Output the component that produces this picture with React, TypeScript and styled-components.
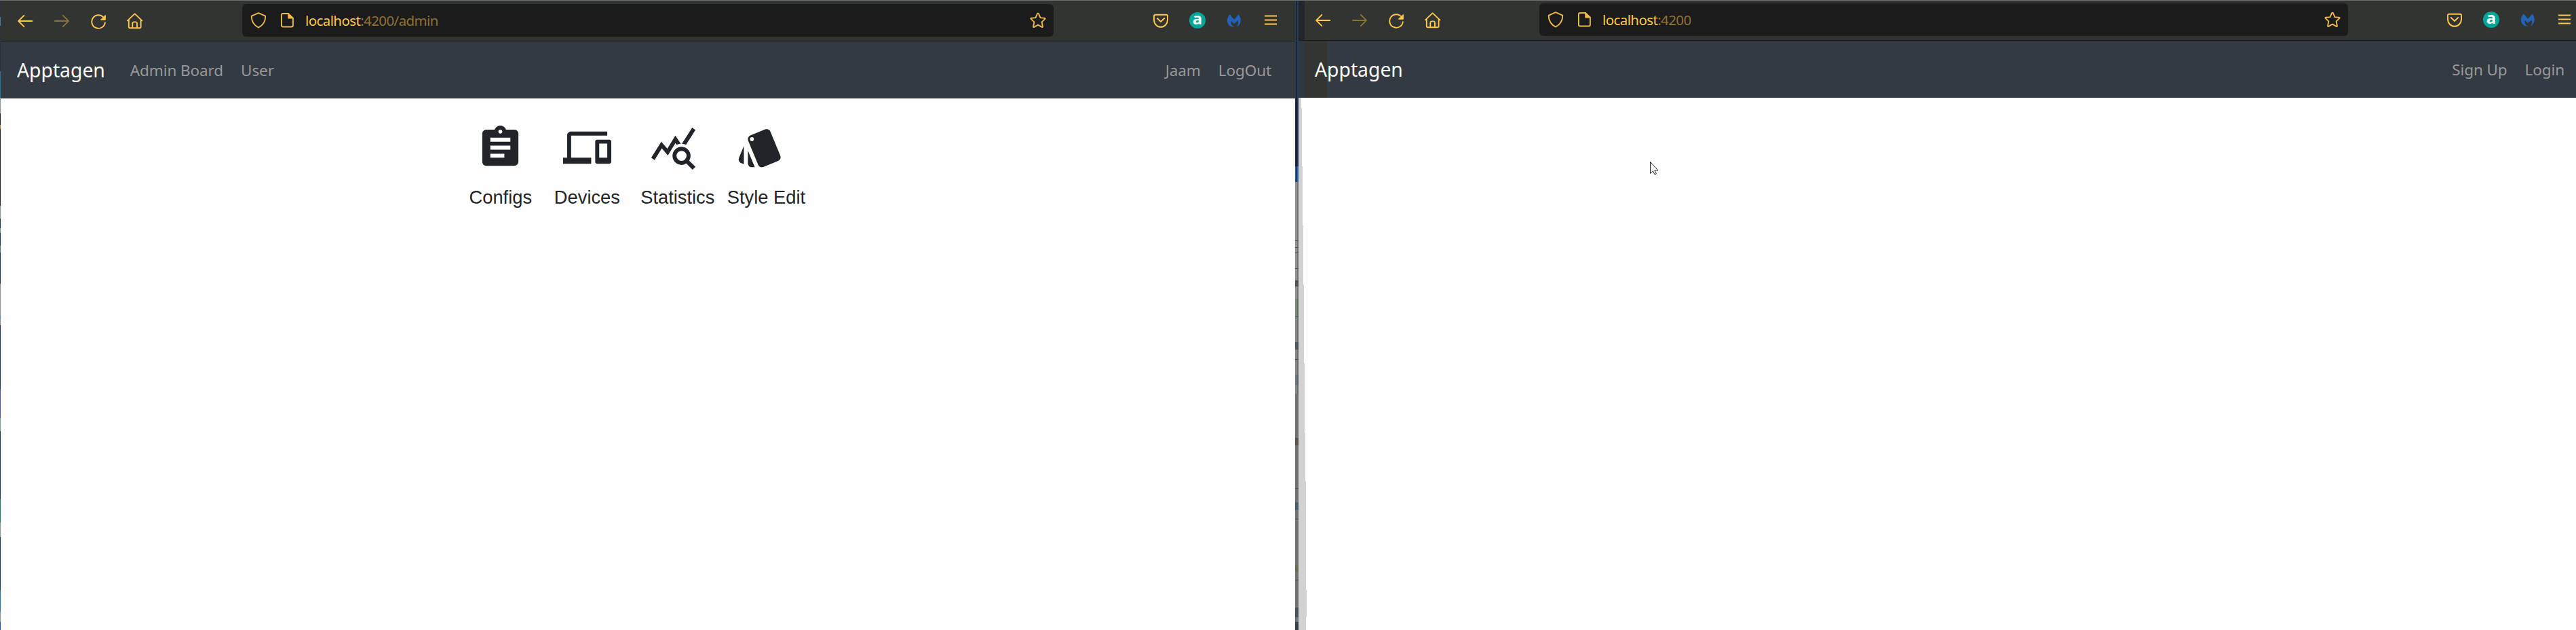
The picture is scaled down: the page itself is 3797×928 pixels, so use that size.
import React from 'react';
import styled, { createGlobalStyle } from 'styled-components';
import { MdAssignment, MdDevices, MdQueryStats, MdStyle } from 'react-icons/md';

const GlobalStyle = createGlobalStyle`
  * { box-sizing: border-box; }
  body { margin: 0; background: #fefefe; overflow: hidden; }
`;

const amber = '#ffc84a';
const uiFont = "'Noto Sans', 'Open Sans', sans-serif";

const Desktop = styled.div`
  display: flex;
  width: 3797px;
  height: 928px;
  overflow: hidden;
  position: relative;
  border-top: 1px solid #6d706e;
  background: #fefefe;
`;

const LeftEdge = styled.div`
  flex: none;
  width: 1px;
  background: linear-gradient(
    #2c3338 0 24px, #4d7c98 24px 37px, #2c3338 37px 104px, #2f6f9b 104px 143px,
    #8e979c 143px 166px, #222426 166px 183px, #b07a3c 183px 189px, #222426 189px 302px,
    #8e979c 302px 321px, #26323b 321px 335px, #7b8a94 335px 342px, #26323b 342px 361px,
    #5b7184 361px 371px, #26323b 371px 417px, #918e8b 417px 464px, #4f8fb4 464px 468px,
    #918e8b 468px 478px, #26323b 478px 572px, #55559a 572px 615px, #8e979c 615px 634px,
    #26323b 634px 734px, #2f7857 734px 769px, #8e979c 769px 790px, #26323b 790px 868px,
    #2f6f9b 868px 900px, #8e979c 900px 915px, #2450a0 915px
  );
`;

const Gap = styled.div`
  flex: none;
  width: 5px;
  background:
    linear-gradient(90deg, transparent 0 2px, #08142c 2px 3px, transparent 3px) 0 0 / 5px 267px no-repeat,
    linear-gradient(90deg, transparent 0 3px, rgba(70, 70, 70, 0.45) 3px) 0 267px / 5px 312px no-repeat,
    linear-gradient(
      #2a3a50 0 143px, #22304c 143px 244px, #2d629c 244px 267px, #919191 267px 353px,
      #555 353px 354px, #919191 354px 363px, #555 363px 364px, #919191 364px 370px,
      #555 370px 371px, #919191 371px 394px, #555 394px 395px, #919191 395px 412px,
      #58534e 412px 421px, #919191 421px 439px, #788a74 439px 465px, #2f5f98 465px 466px,
      #868686 466px 503px, #4a5a68 503px 514px, #868686 514px 528px, #2c4564 528px 529px,
      #868686 529px 551px, #6b7680 551px 566px, #868686 566px 579px, #707272 579px 644px,
      #5b534a 644px 655px, #707272 655px 718px, #505252 718px 719px, #707272 719px 739px,
      #4b5a6b 739px 750px, #707272 750px 763px, #505252 763px 764px, #707272 764px 832px,
      #6b6a55 832px 841px, #707272 841px 853px, #505252 853px 854px, #707272 854px 894px,
      #47525c 894px 908px, #687173 908px 915px, #33414c 915px
    );
`;

const Window = styled.section<{ $width: number }>`
  flex: none;
  display: flex;
  flex-direction: column;
  width: ${(p) => p.$width}px;
  background: #fefefe;
`;

const Toolbar = styled.div<{ $compact?: boolean }>`
  flex: none;
  display: flex;
  align-items: flex-start;
  height: ${(p) => (p.$compact ? 59 : 60)}px;
  padding: ${(p) => (p.$compact ? '4px 5px 0 24px' : '5px 24px 0 24px')};
  border-bottom: 1px solid #191a1a;
  background: ${(p) =>
    p.$compact ? 'linear-gradient(90deg, #23272b 0 9px, #323432 9px)' : '#323432'};
`;

const IconRow = styled.div<{ $drop?: number }>`
  flex: none;
  display: flex;
  align-items: center;
  gap: 30px;
  height: 48px;
  padding-top: ${(p) => p.$drop ?? 0}px;
  color: ${amber};

  svg { display: block; }
`;

const AddressBar = styled.div<{ $width: number; $start: number }>`
  flex: none;
  display: flex;
  align-items: center;
  width: ${(p) => p.$width}px;
  height: 48px;
  margin-left: ${(p) => p.$start}px;
  padding: 0 11px 0 12px;
  border-radius: 6px;
  background: #1b1b1b;
  color: #ecb94a;

  svg { display: block; flex: none; }
`;

const PageGlyph = styled.span`
  margin: 0 17px 0 20px;
`;

const Url = styled.span`
  flex: 1;
  font: 20.5px/28px ${uiFont};
  letter-spacing: -0.6px;
  white-space: nowrap;
  color: #8b7238;

  b { font-weight: 400; color: #ffc84a; }
`;

const Spacer = styled.div`
  flex: 1;
`;

const NavBar = styled.nav<{ $compact?: boolean }>`
  flex: none;
  display: flex;
  align-items: center;
  height: 84px;
  padding: ${(p) => (p.$compact ? '0 17px 0 24px' : '0 35px 0 24px')};
  background: ${(p) =>
    p.$compact ? 'linear-gradient(90deg, #2f3840 0 8px, #333532 8px 42px, #343a41 42px)' : '#343a41'};
  font-family: ${uiFont};
  white-space: nowrap;
`;

const Brand = styled.a`
  margin-right: 37px;
  font-size: 28.3px;
  color: #fff;
`;

const Links = styled.div`
  display: flex;
  gap: 26px;
  padding-top: 1px;
`;

const NavLink = styled.a`
  font-size: 22.5px;
  letter-spacing: -0.1px;
  color: #97999b;
`;

const Page = styled.main`
  flex: 1;
  display: flex;
`;

const PageEdge = styled.svg`
  display: block;
  flex: none;
`;

const Menu = styled.div`
  display: flex;
  gap: 30px;
  height: 190px;
  margin-left: 688px;
  padding-top: 37px;
`;

const MenuItem = styled.a`
  display: flex;
  flex-direction: column;
  width: 97.6px;
  color: #212529;

  svg { align-self: center; width: 71px; height: 71px; }
`;

const MenuLabel = styled.span`
  margin-top: 22px;
  font: 27.3px/32px 'Liberation Sans', Arial, sans-serif;
  text-align: center;
  white-space: nowrap;
`;

const Pointer = styled.svg`
  position: absolute;
  left: 2431px;
  top: 236px;
`;

const Line = ({ children, width = 24, fade }: { children: React.ReactNode; width?: number; fade?: boolean }) => (
  <svg width={width} height={24} viewBox={`0 0 ${width} 24`} fill="none" stroke="currentColor" strokeWidth={1.9}
    strokeLinecap="round" strokeLinejoin="round" opacity={fade ? 0.42 : 1}>
    {children}
  </svg>
);

const Back = () => <Line><path d="M22.3 12H2.4M10.3 3.8 2.2 12l8.1 8.2" /></Line>;
const Forward = () => <Line fade><path d="M1.9 12h19.9M13.9 3.8 22 12l-8.1 8.2" /></Line>;
const Reload = () => (
  <Line>
    <path d="M21.8 14.3A9.8 9.8 0 1 1 20 7.2" />
    <path d="M22.3 3.8v6.4h-6.7z" fill="currentColor" strokeWidth={1} />
  </Line>
);
const Home = () => (
  <Line>
    <path d="M1 11.4 11.2 1.6q.4-.3.8 0L22.3 11.4M2.8 10v10.4q0 1.8 1.8 1.8h14.2q1.8 0 1.8-1.8V10" />
    <path d="M8.3 22v-6.2q0-2.4 2.4-2.4h1.9q2.4 0 2.4 2.4V22" />
  </Line>
);
const Shield = () => <Line><path d="M12 1.1 22.2 5.7C22.6 13 18.5 19.6 12 22.6 5.5 19.6 1.4 13 1.8 5.7z" /></Line>;
const Doc = () => (
  <Line width={20}>
    <path d="M12 2H4.2Q1.9 2 1.9 4.3v14.9q0 2.3 2.3 2.3h12.4q2.3 0 2.3-2.3V8.7" />
    <path d="M12.2 2.2v6.3h6.5z" fill="currentColor" />
  </Line>
);
const Star = () => (
  <Line>
    <path d="M12 1.6q.7 0 1 .7l2.500 5.800 6.200.6q1.500.2.5 1.400l-4.600 4.300 1.300 6.600q.1 1.400-1.200.9L12 18.700l-5.700 3.200q-1.300.5-1.200-.9l1.300-6.600L1.800 10.100q-1-1.200.5-1.400l6.200-.6L11 2.300q.3-.7 1-.7z" />
  </Line>
);
const Pocket = () => (
  <Line>
    <path d="M4 3.7h16q2 0 2 2V11c0 6.2-4.5 10.8-10 10.8S2 17.2 2 11V5.7q0-2 2-2z" />
    <path d="m6.8 9 5.2 5 5.2-5" />
  </Line>
);
const Badge = styled.span`
  display: flex;
  align-items: center;
  justify-content: center;
  width: 24px;
  height: 24px;
  border-radius: 50%;
  background: #00a698;
  font: bold 24px/24px 'Open Sans', sans-serif;
  color: #fff;

  span { margin-top: -7px; }
`;
const Butterfly = () => (
  <svg width="24" height="24" viewBox="0 0 24 24">
    <path
      fill="#2263b8"
      d="M5.6 3.2 12.2 10.7 18.6 3.2c3.8 4.8 5 11.5-.9 17.6l-1.6.7c2.2-3 2.4-6 1.5-9.3L12.1 17 7.7 12.8c-1 3.6.4 7 5 9C4.7 22 1.2 16.3 2 10.2 2.5 7.4 4 5 5.6 3.2z"
    />
  </svg>
);
const Hamburger = () => (
  <svg width="24" height="24" viewBox="0 0 24 24" fill="none" stroke={amber} strokeWidth="1.9">
    <path d="M3 5.5h18M3 11.5h18M3 17.5h18" />
  </svg>
);

const menuItems = [
  { label: 'Configs', Icon: MdAssignment },
  { label: 'Devices', Icon: MdDevices },
  { label: 'Statistics', Icon: MdQueryStats },
  { label: 'Style Edit', Icon: MdStyle },
];

interface ChromeProps {
  path: string;
  width: number;
  start: number;
  compact?: boolean;
}

const BrowserChrome = ({ path, width, start, compact }: ChromeProps) => (
  <Toolbar $compact={compact}>
    <IconRow $drop={2}>
      <Back />
      <Forward />
      <Reload />
      <Home />
    </IconRow>
    <AddressBar $width={width} $start={start}>
      <Shield />
      <PageGlyph><Doc /></PageGlyph>
      <Url><b>localhost</b>{path}</Url>
      <Star />
    </AddressBar>
    <Spacer />
    <IconRow>
      <Pocket />
      <Badge><span>a</span></Badge>
      <Butterfly />
      <Hamburger />
    </IconRow>
  </Toolbar>
);

export default function App() {
  return (
    <>
      <GlobalStyle />
      <Desktop>
        <LeftEdge />
        <Window $width={1908}>
          <BrowserChrome path=":4200/admin" width={1196} start={146} />
          <NavBar>
            <Brand>Apptagen</Brand>
            <Links>
              <NavLink>Admin Board</NavLink>
              <NavLink>User</NavLink>
            </Links>
            <Spacer />
            <Links>
              <NavLink>Jaam</NavLink>
              <NavLink>LogOut</NavLink>
            </Links>
          </NavBar>
          <Page>
            <Menu>
              {menuItems.map(({ label, Icon }) => (
                <MenuItem key={label}>
                  <Icon />
                  <MenuLabel>{label}</MenuLabel>
                </MenuItem>
              ))}
            </Menu>
          </Page>
        </Window>
        <Gap />
        <Window $width={1883}>
          <BrowserChrome path=":4200" width={1192} start={145} compact />
          <NavBar $compact>
            <Brand>Apptagen</Brand>
            <Spacer />
            <Links>
              <NavLink>Sign Up</NavLink>
              <NavLink>Login</NavLink>
            </Links>
          </NavBar>
          <Page>
            <PageEdge width="12" height="784" viewBox="0 0 12 784">
              <path
                fill="#d2d2d2"
                d="M0 0H4V15H5V101H6V188H7V275H8V391H9V493H10V565H11V725H12V765H11V784H0z"
              />
            </PageEdge>
          </Page>
        </Window>
        <Pointer width="14" height="22" viewBox="0 0 14 22">
          <path d="M1.5 1.5v17l3.9-3.6 2.7 5.3 2.3-1.2-2.5-5H13z" fill="#fff" stroke="#22252c" strokeWidth="1" />
        </Pointer>
      </Desktop>
    </>
  );
}
